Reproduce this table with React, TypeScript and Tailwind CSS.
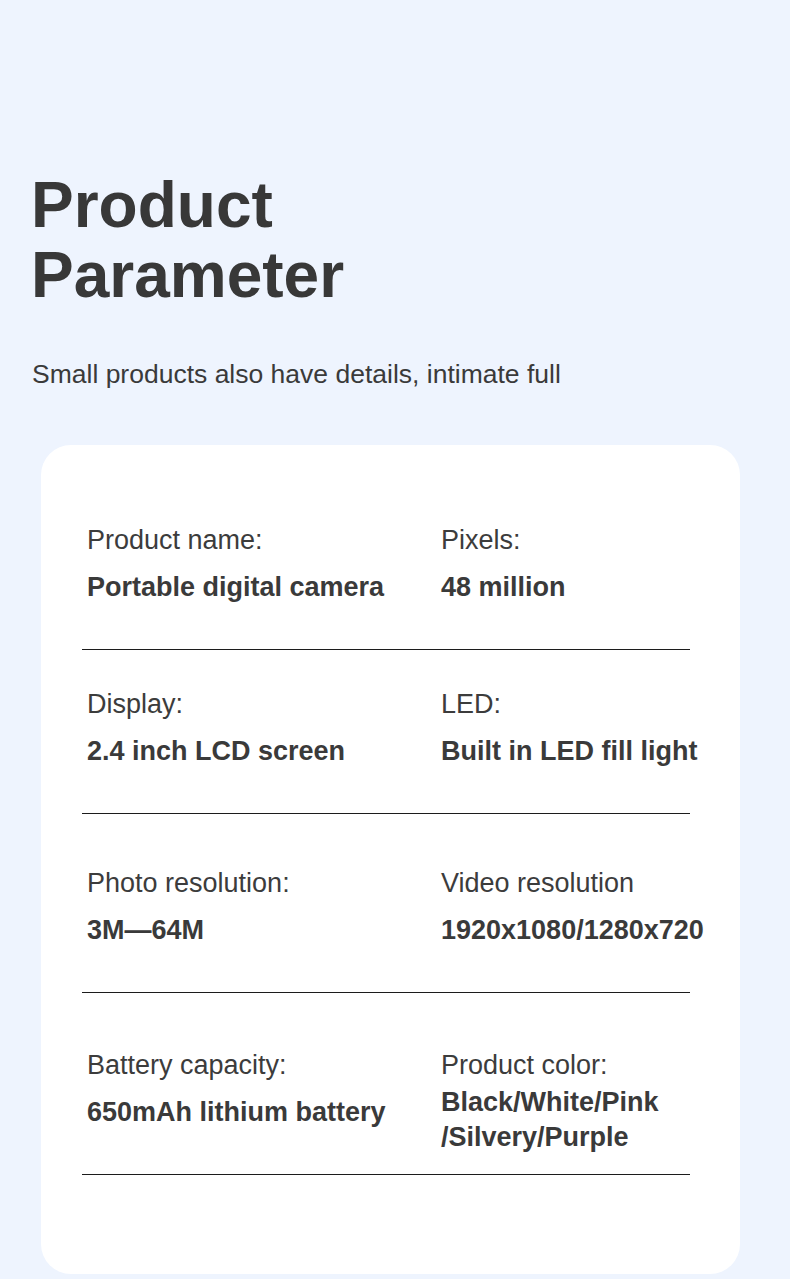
import React from "react";

type Cell = { label: string; value: string[] };
type Row = { left: Cell; right: Cell; pt: string; pb: string; rightTight?: boolean };

const rows: Row[] = [
  {
    left: { label: "Product name:", value: ["Portable digital camera"] },
    right: { label: "Pixels:", value: ["48 million"] },
    pt: "pt-[80px]",
    pb: "pb-[47px]",
  },
  {
    left: { label: "Display:", value: ["2.4 inch LCD screen"] },
    right: { label: "LED:", value: ["Built in LED fill light"] },
    pt: "pt-[39px]",
    pb: "pb-[47px]",
  },
  {
    left: { label: "Photo resolution:", value: ["3M\u201464M"] },
    right: { label: "Video resolution", value: ["1920x1080/1280x720"] },
    pt: "pt-[54px]",
    pb: "pb-[47px]",
  },
  {
    left: { label: "Battery capacity:", value: ["650mAh lithium battery"] },
    right: { label: "Product color:", value: ["Black/White/Pink", "/Silvery/Purple"] },
    pt: "pt-[57px]",
    pb: "pb-[19px]",
    rightTight: true,
  },
];

function CellView({ cell, tight }: { cell: Cell; tight?: boolean }) {
  return (
    <div className="flex flex-col">
      <div className="text-[27px] leading-[30px] text-[#3c3c3c] whitespace-nowrap">{cell.label}</div>
      {tight ? (
        <div className="mt-[5px] text-[27px] leading-[35px] font-bold text-[#3a3a3a] whitespace-nowrap">
          {cell.value.map((v) => (
            <div key={v}>{v}</div>
          ))}
        </div>
      ) : (
        <div className="mt-[17px] text-[27px] leading-[30px] font-bold text-[#3a3a3a] whitespace-nowrap">
          {cell.value.map((v) => (
            <div key={v}>{v}</div>
          ))}
        </div>
      )}
    </div>
  );
}

export default function App() {
  return (
    <div
      className="w-[790px] h-[1279px] bg-[#eef4fe] overflow-hidden"
      style={{ fontFamily: '"Liberation Sans", Arial, sans-serif' }}
    >
      <div className="pt-[170px] pl-[31px]">
        <h1 className="text-[64px] leading-[70px] font-bold text-[#383838]">
          Product
          <br />
          Parameter
        </h1>
      </div>
      <p className="mt-[48px] pl-[32px] text-[26.5px] leading-[32px] text-[#3a3a3a]">
        Small products also have details, intimate full
      </p>
      <div className="mt-[55px] ml-[41px] w-[699px] h-[829px] bg-white rounded-[30px]">
        <div className="ml-[41px] mr-[50px]">
          {rows.map((r, i) => (
            <div
              key={i}
              className={`grid grid-cols-[354px_1fr] items-start pl-[5px] border-b border-[#1c1c1c] ${r.pt} ${r.pb}`}
            >
              <CellView cell={r.left} />
              <CellView cell={r.right} tight={r.rightTight} />
            </div>
          ))}
        </div>
      </div>
    </div>
  );
}
